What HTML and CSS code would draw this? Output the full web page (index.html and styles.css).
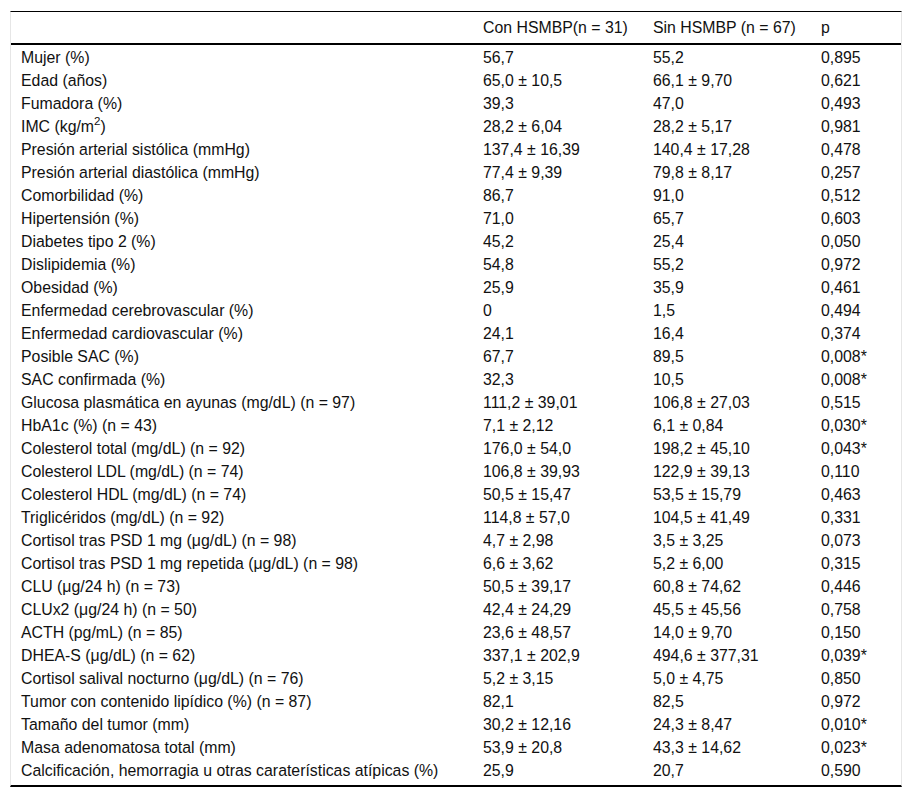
FILE: index.html
```html
<!DOCTYPE html>
<html lang="es">
<head>
<meta charset="utf-8">
<title>Tabla</title>
<link rel="stylesheet" href="styles.css">
</head>
<body>
<div class="wrap">
<table class="data">
<colgroup><col class="c1"><col class="c2"><col class="c3"><col class="c4"></colgroup>
<thead>
<tr><th></th><th>Con HSMBP(n = 31)</th><th>Sin HSMBP (n = 67)</th><th>p</th></tr>
</thead>
<tbody>
<tr><td>Mujer (%)</td><td>56,7</td><td>55,2</td><td>0,895</td></tr>
<tr><td>Edad (años)</td><td>65,0 ± 10,5</td><td>66,1 ± 9,70</td><td>0,621</td></tr>
<tr><td>Fumadora (%)</td><td>39,3</td><td>47,0</td><td>0,493</td></tr>
<tr><td>IMC (kg/m<sup>2</sup>)</td><td>28,2 ± 6,04</td><td>28,2 ± 5,17</td><td>0,981</td></tr>
<tr><td>Presión arterial sistólica (mmHg)</td><td>137,4 ± 16,39</td><td>140,4 ± 17,28</td><td>0,478</td></tr>
<tr><td>Presión arterial diastólica (mmHg)</td><td>77,4 ± 9,39</td><td>79,8 ± 8,17</td><td>0,257</td></tr>
<tr><td>Comorbilidad (%)</td><td>86,7</td><td>91,0</td><td>0,512</td></tr>
<tr><td>Hipertensión (%)</td><td>71,0</td><td>65,7</td><td>0,603</td></tr>
<tr><td>Diabetes tipo 2 (%)</td><td>45,2</td><td>25,4</td><td>0,050</td></tr>
<tr><td>Dislipidemia (%)</td><td>54,8</td><td>55,2</td><td>0,972</td></tr>
<tr><td>Obesidad (%)</td><td>25,9</td><td>35,9</td><td>0,461</td></tr>
<tr><td>Enfermedad cerebrovascular (%)</td><td>0</td><td>1,5</td><td>0,494</td></tr>
<tr><td>Enfermedad cardiovascular (%)</td><td>24,1</td><td>16,4</td><td>0,374</td></tr>
<tr><td>Posible SAC (%)</td><td>67,7</td><td>89,5</td><td>0,008*</td></tr>
<tr><td>SAC confirmada (%)</td><td>32,3</td><td>10,5</td><td>0,008*</td></tr>
<tr><td>Glucosa plasmática en ayunas (mg/dL) (n = 97)</td><td>111,2 ± 39,01</td><td>106,8 ± 27,03</td><td>0,515</td></tr>
<tr><td>HbA1c (%) (n = 43)</td><td>7,1 ± 2,12</td><td>6,1 ± 0,84</td><td>0,030*</td></tr>
<tr><td>Colesterol total (mg/dL) (n = 92)</td><td>176,0 ± 54,0</td><td>198,2 ± 45,10</td><td>0,043*</td></tr>
<tr><td>Colesterol LDL (mg/dL) (n = 74)</td><td>106,8 ± 39,93</td><td>122,9 ± 39,13</td><td>0,110</td></tr>
<tr><td>Colesterol HDL (mg/dL) (n = 74)</td><td>50,5 ± 15,47</td><td>53,5 ± 15,79</td><td>0,463</td></tr>
<tr><td>Triglicéridos (mg/dL) (n = 92)</td><td>114,8 ± 57,0</td><td>104,5 ± 41,49</td><td>0,331</td></tr>
<tr><td>Cortisol tras PSD 1 mg (μg/dL) (n = 98)</td><td>4,7 ± 2,98</td><td>3,5 ± 3,25</td><td>0,073</td></tr>
<tr><td>Cortisol tras PSD 1 mg repetida (μg/dL) (n = 98)</td><td>6,6 ± 3,62</td><td>5,2 ± 6,00</td><td>0,315</td></tr>
<tr><td>CLU (μg/24 h) (n = 73)</td><td>50,5 ± 39,17</td><td>60,8 ± 74,62</td><td>0,446</td></tr>
<tr><td>CLUx2 (μg/24 h) (n = 50)</td><td>42,4 ± 24,29</td><td>45,5 ± 45,56</td><td>0,758</td></tr>
<tr><td>ACTH (pg/mL) (n = 85)</td><td>23,6 ± 48,57</td><td>14,0 ± 9,70</td><td>0,150</td></tr>
<tr><td>DHEA-S (μg/dL) (n = 62)</td><td>337,1 ± 202,9</td><td>494,6 ± 377,31</td><td>0,039*</td></tr>
<tr><td>Cortisol salival nocturno (μg/dL) (n = 76)</td><td>5,2 ± 3,15</td><td>5,0 ± 4,75</td><td>0,850</td></tr>
<tr><td>Tumor con contenido lipídico (%) (n = 87)</td><td>82,1</td><td>82,5</td><td>0,972</td></tr>
<tr><td>Tamaño del tumor (mm)</td><td>30,2 ± 12,16</td><td>24,3 ± 8,47</td><td>0,010*</td></tr>
<tr><td>Masa adenomatosa total (mm)</td><td>53,9 ± 20,8</td><td>43,3 ± 14,62</td><td>0,023*</td></tr>
<tr><td>Calcificación, hemorragia u otras caraterísticas atípicas (%)</td><td>25,9</td><td>20,7</td><td>0,590</td></tr>
</tbody>
</table>
</div>
</body>
</html>
```

FILE: styles.css
```css
html, body {
  margin: 0;
  padding: 0;
  background: #fff;
}
body {
  font-family: "Liberation Sans", Arial, sans-serif;
  font-size: 15.85px;
  color: #111;
}
.wrap {
  margin: 11px 10px 0 10px;
  width: 892px;
  box-sizing: border-box;
  border-left: 1px solid #e6e6e6;
  border-right: 1px solid #e6e6e6;
  border-top: 1px solid #000;
  border-bottom: 2px solid #000;
  padding-bottom: 3px;
}
.data {
  border-collapse: collapse;
  width: 890px;
  table-layout: fixed;
}
.c1 { width: 462px; }
.c2 { width: 170px; }
.c3 { width: 168px; }
.c4 { width: 90px; }
.data th {
  font-weight: normal;
  text-align: left;
  height: 31px;
  padding: 0 10px;
  border-bottom: 2px solid #000;
  vertical-align: middle;
  white-space: nowrap;
}
.data td {
  height: 23px;
  padding: 0 10px;
  line-height: 18px;
  white-space: nowrap;
  vertical-align: middle;
}
.data tbody tr:first-child td {
  padding-top: 1px;
}
.data sup {
  font-size: 11.5px;
  line-height: 0;
  vertical-align: 7px;
}
```
